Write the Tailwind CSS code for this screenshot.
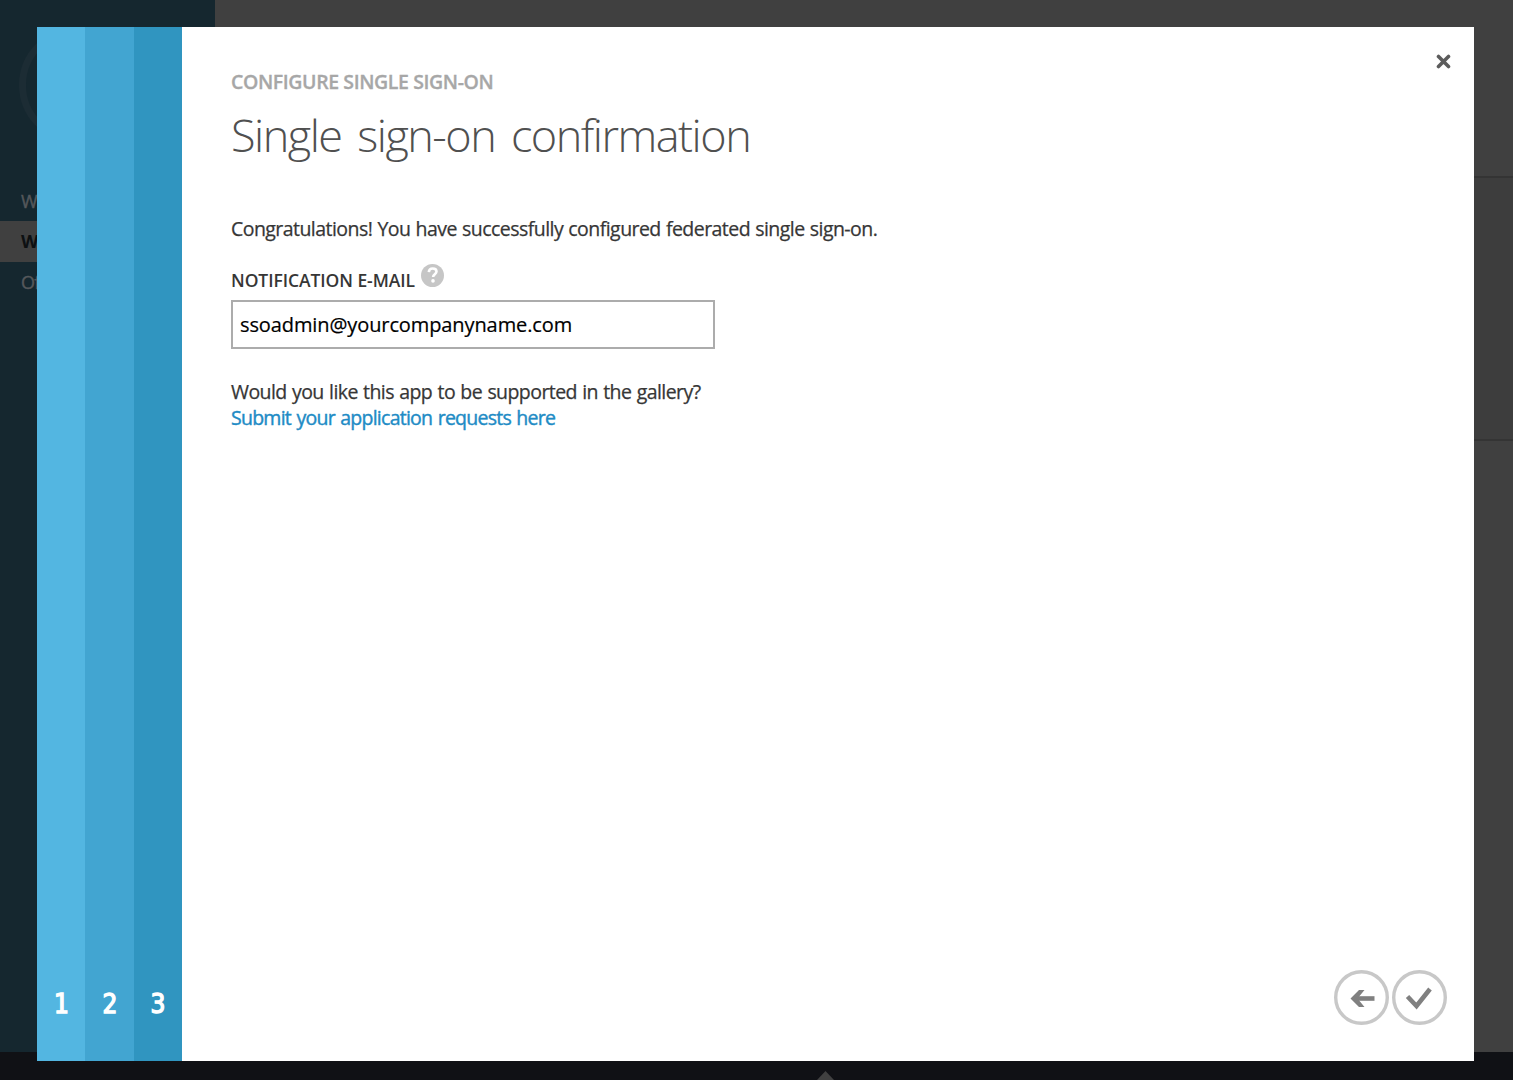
<!DOCTYPE html>
<html lang="en">
<head>
<meta charset="utf-8">
<title>Configure single sign-on</title>
<script src="https://cdn.jsdelivr.net/npm/@tailwindcss/browser@4"></script>
</head>
<body class="relative h-screen overflow-hidden bg-[#404040] font-['Open_Sans','Noto_Sans',sans-serif]">

<!-- Dimmed portal behind the dialog -->
<div class="flex h-full flex-col">
  <div class="flex min-h-0 flex-1">
    <nav class="w-[215px] shrink-0 bg-[#15272f] text-[18px] text-[#55585b]">
      <div class="h-[181px] pt-[27px] pl-[19px]">
        <div class="size-[116px] rounded-full border-[7px] border-[#1c2c34]"></div>
      </div>
      <div class="flex h-10 items-center pl-[21px] whitespace-nowrap [-webkit-text-stroke:0.4px]">Web Apps</div>
      <div class="flex h-[41px] items-center bg-[#404040] pl-[21px] font-bold whitespace-nowrap text-[#0d1012]">Workspace</div>
      <div class="flex h-10 items-center pl-[21px] tracking-[-0.8px] whitespace-nowrap [-webkit-text-stroke:0.4px]">Office</div>
    </nav>
    <main class="flex-1">
      <div class="h-[178px] border-b-2 border-[#343434]"></div>
      <div class="h-[263px] border-b-2 border-[#343434] bg-[#3d3d3d]"></div>
    </main>
  </div>
  <footer class="flex h-7 items-end bg-[#101115] pl-[817px]">
    <svg class="h-[9px] w-[17px]" viewBox="0 0 17 9"><path d="M0 9 8.5 0 17 9z" fill="#404040"/></svg>
  </footer>
</div>

<!-- Wizard dialog -->
<section class="absolute top-[27px] left-[37px] flex h-[1034px] w-[1437px] bg-white">
  <ol class="flex shrink-0 items-stretch text-center font-['DejaVu_Sans_Condensed','DejaVu_Sans',sans-serif] text-[26px] leading-[36px] text-white [-webkit-text-stroke:1.3px_white]">
    <li class="flex w-[48px] items-end justify-center bg-[#53b6e1] pb-[39px] pl-px">1</li>
    <li class="flex w-[49px] items-end justify-center bg-[#42a5d1] pb-[39px] pl-px">2</li>
    <li class="flex w-[48px] items-end justify-center bg-[#3095c0] pb-[39px]">3</li>
  </ol>

  <div class="flex flex-1 flex-col pl-[49px]">
    <header class="flex h-[176px] justify-between pt-[25px] pr-[23px]">
      <div class="pt-[16px] whitespace-nowrap">
        <h2 class="text-[19.5px] leading-[28px] font-semibold tracking-[-0.4px] text-[#a7a7a7] [-webkit-text-stroke:0.3px]">CONFIGURE SINGLE SIGN-ON</h2>
        <h1 class="mt-[9px] text-[45px] leading-[60px] font-light tracking-[-1.5px] [word-spacing:5.5px] text-[#505050]">Single sign-on confirmation</h1>
      </div>
      <svg class="mt-[2px] size-[15px]" viewBox="0 0 15 15"><path d="m2.5 2.5 10 10m0-10-10 10" stroke="#5c5c5c" stroke-width="3.6" stroke-linecap="round"/></svg>
    </header>

    <div class="flex-1 text-[19.5px] leading-[26px] whitespace-nowrap text-[#363636]">
      <p class="pt-[13px] tracking-[-0.55px] [word-spacing:0.7px] [-webkit-text-stroke:0.25px]">Congratulations! You have successfully configured federated single sign-on.</p>
      <div class="mt-[22px] flex h-[36px]">
        <label for="mail" class="pt-[3px] text-[17.5px] font-semibold tracking-[-0.07px]">NOTIFICATION E-MAIL</label>
        <svg class="ml-[6px] size-[23px]" viewBox="0 0 23 23"><circle cx="11.5" cy="11.5" r="11.5" fill="#c6c6c6"/><path d="M7.8 8.1c.2-2.4 1.7-3.6 3.9-3.6 2.2 0 3.8 1.2 3.8 3.1 0 2.5-3.4 2.7-3.4 5.4" fill="none" stroke="#fff" stroke-width="2.6"/><circle cx="12" cy="16.9" r="1.8" fill="#fff"/></svg>
      </div>
      <input id="mail" type="text" value="ssoadmin@yourcompanyname.com" class="block h-[49px] w-[484px] border-2 border-[#acacac] bg-white px-[7px] text-[20px] tracking-[-0.1px] text-black [-webkit-text-stroke:0.2px]">
      <p class="mt-[30px] tracking-[-0.57px] [word-spacing:0.8px] [-webkit-text-stroke:0.25px]">Would you like this app to be supported in the gallery?</p>
      <a href="#" class="block tracking-[-0.74px] [word-spacing:1px] text-[#218bc5] [-webkit-text-stroke:0.4px]">Submit your application requests here</a>
    </div>

    <footer class="flex justify-end gap-[3px] pr-[27px] pb-[36px]">
      <svg class="size-[55px]" viewBox="0 0 55 55" fill="none"><circle cx="27.5" cy="27.5" r="25.8" stroke="#c8c8c8" stroke-width="3.4"/><path d="M40.5 28.5H20" stroke="#808080" stroke-width="4.6"/><path d="M16.500 28.500 25 20h5.500l-7 8.500 7 8.500H25z" fill="#808080"/></svg>
      <svg class="size-[55px]" viewBox="0 0 55 55" fill="none"><circle cx="27.5" cy="27.5" r="25.8" stroke="#c8c8c8" stroke-width="3.4"/><path d="m15.500 26.500 9 9.500L38 19" stroke="#808080" stroke-width="4.600"/></svg>
    </footer>
  </div>
</section>
</body>
</html>
